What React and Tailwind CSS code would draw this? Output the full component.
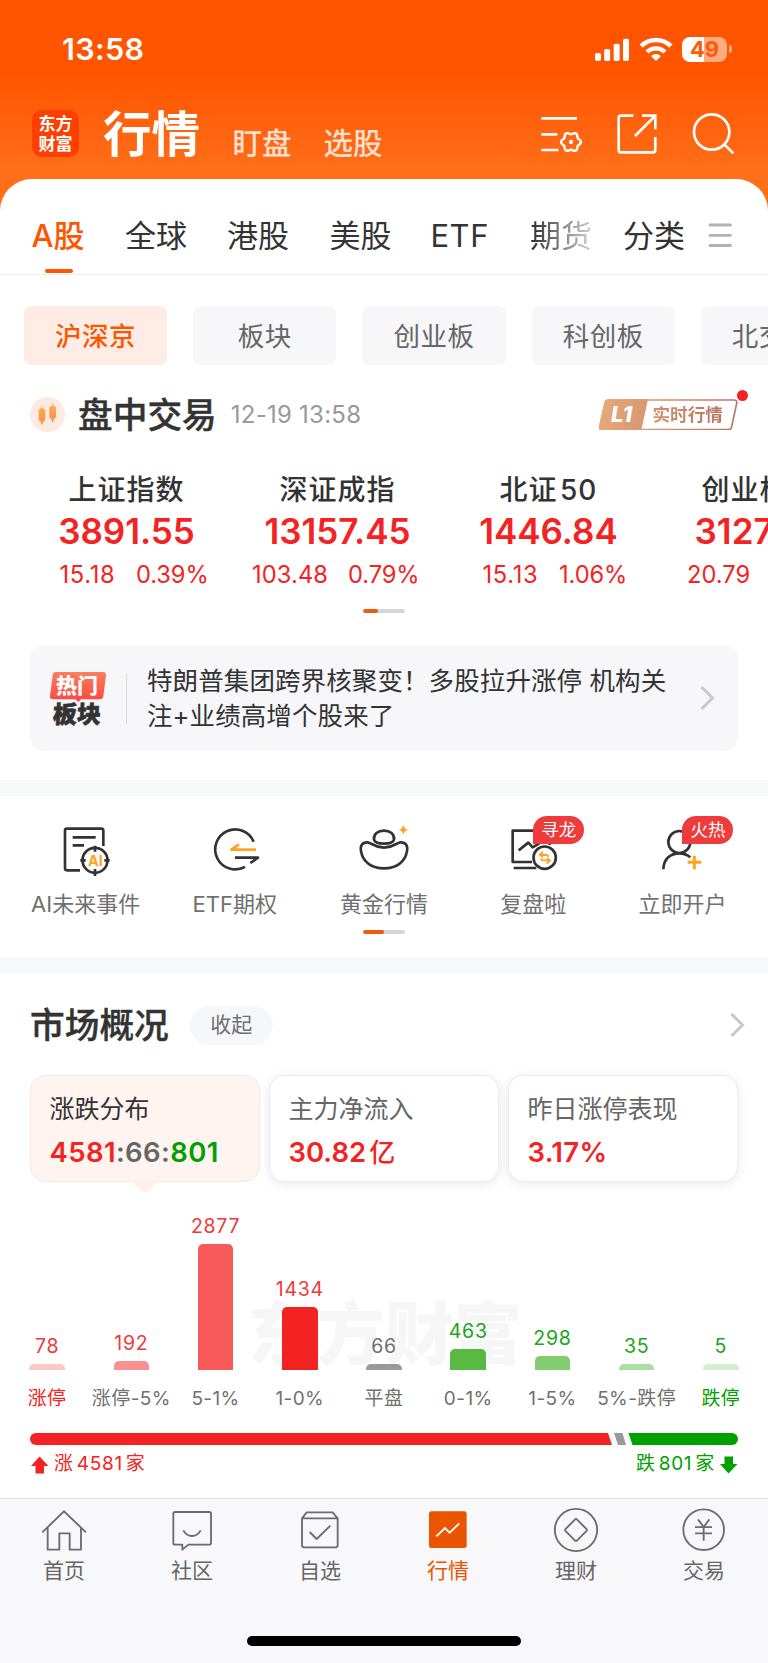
import React from "react";

const TABS = [
  { name: "全球", cls: "ml-[40.500px]" },
  { name: "港股", cls: "ml-[40px]" },
  { name: "美股", cls: "ml-[40.500px]" },
];

const CHIPS = ["沪深京", "板块", "创业板", "科创板", "北交所"];

const INDEXES = [
  { name: "上证指数", value: "3891.55", diff: "15.18", pct: "0.39%", pad: "pl-[38.500px]", gap: "w-[76.500px]", dt: "tracking-[0.700px]" },
  { name: "深证成指", value: "13157.45", diff: "103.48", pct: "0.79%", pad: "pl-[20px]", gap: "w-[96px]", dt: "tracking-[0.100px]" },
  { name: "北证 50", value: "1446.84", diff: "15.13", pct: "1.06%", pad: "pl-[39.500px]", gap: "w-[76.500px]", dt: "tracking-[0.700px]" },
  { name: "创业板指", value: "3127.95", diff: "20.79", pct: "0.67%", pad: "pl-[33px]", gap: "w-[80px]", dt: "tracking-[0px]" },
];

const BARS = [
  { v: "78", label: "涨停", h: 6.5, bar: "bg-[#fcc8c8]", text: "text-[#ee3a3a]", lab: "text-[#f42323]" },
  { v: "192", label: "涨停-5%", h: 9, bar: "bg-[#f99191]", text: "text-[#ee3a3a]", lab: "text-[#707070]" },
  { v: "2877", label: "5-1%", h: 126.5, bar: "bg-[#f85a5a]", text: "text-[#ee3a3a]", lab: "text-[#707070]" },
  { v: "1434", label: "1-0%", h: 63, bar: "bg-[#f42323]", text: "text-[#ee3a3a]", lab: "text-[#707070]" },
  { v: "66", label: "平盘", h: 6.5, bar: "bg-[#999999]", text: "text-[#707070]", lab: "text-[#707070]" },
  { v: "463", label: "0-1%", h: 21, bar: "bg-[#5ab943]", text: "text-[#1aa51a]", lab: "text-[#707070]" },
  { v: "298", label: "1-5%", h: 14, bar: "bg-[#83cc72]", text: "text-[#1aa51a]", lab: "text-[#707070]" },
  { v: "35", label: "5%-跌停", h: 6.5, bar: "bg-[#acdda1]", text: "text-[#1aa51a]", lab: "text-[#707070]" },
  { v: "5", label: "跌停", h: 6.5, bar: "bg-[#d5eed0]", text: "text-[#1aa51a]", lab: "text-[#00a000]" },
];

const gearPath = (cx, cy) => {
  const pts = [];
  for (let i = 0; i < 120; i++) {
    const a = (i / 120) * Math.PI * 2;
    const r = 26.5 + 3 * Math.cos(6 * a);
    pts.push(`${(cx + r * Math.cos(a)).toFixed(1)} ${(cy + r * Math.sin(a)).toFixed(1)}`);
  }
  return `M${pts.join("L")}Z`;
};

function StatusBar() {
  return (
    <div className="flex h-[98px] items-center justify-between pl-[62px] pr-[36px] text-white">
      <span className="text-[30.500px] font-semibold tracking-[0.300px]">13:58</span>
      <div className="flex items-center">
        <svg className="h-[25px] w-[36px]" viewBox="630 108 108 75" fill="#fff">
          <rect x="633" y="156" width="18" height="24" rx="5" />
          <rect x="660.5" y="144" width="18" height="36" rx="5" />
          <rect x="689" y="128" width="18" height="52" rx="5" />
          <rect x="717" y="113" width="18" height="67" rx="5" />
        </svg>
        <svg className="ml-[9px] h-[25px] w-[34px]" viewBox="764 108 102 75" fill="none" stroke="#fff">
          <path d="M770.5 135.5A63 63 0 0 1 859.5 135.5" strokeWidth="14" />
          <path d="M788 153A38.5 38.5 0 0 1 842 153" strokeWidth="13" />
          <path d="M815 180L800 165A21.500 21.500 0 0 1 830 165Z" fill="#fff" stroke="none" />
        </svg>
        <div className="ml-[9px] flex h-[25px] w-[45px] items-center justify-center rounded-[8px] bg-[linear-gradient(90deg,#fff_48.500%,#ffab80_48.500%)] text-[22px] font-bold leading-none text-[#ff5a05]">
          49
        </div>
        <div className="ml-[2px] h-[8px] w-[3px] rounded-r-[3px] bg-[#ffab80]" />
      </div>
    </div>
  );
}

function NavBar() {
  return (
    <div className="flex h-[81px] pl-[32px] pr-[33px] text-white">
      <div className="mt-[12px] flex h-[47px] w-[47px] flex-col items-center justify-center rounded-[10px] bg-[#ff3f00] text-[17px] font-bold leading-[20px]">
        <span>东方</span>
        <span>财富</span>
      </div>
      <span className="ml-[24px] text-[48.500px] font-bold leading-[73px]">行情</span>
      <span className="ml-[32.500px] text-[29.500px] font-medium leading-[91px] text-[#ffe0d0]">盯盘</span>
      <span className="ml-[32px] text-[29.500px] font-medium leading-[91px] text-[#ffe0d0]">选股</span>
      <div className="mt-[14px] ml-auto flex gap-[33px]">
        <svg className="h-[43px] w-[43px]" viewBox="0 0 129 129" fill="none" stroke="#fff" strokeWidth="8">
          <path d="M4 19H111M4 67H52M4 114H55" />
          <path d={gearPath(93, 90)} strokeWidth="7.5" strokeLinejoin="round" />
          <circle cx="93" cy="90" r="6.500" fill="#fff" stroke="none" />
        </svg>
        <svg className="h-[43px] w-[43px]" viewBox="0 0 129 129" fill="none" stroke="#fff" strokeWidth="8">
          <path d="M52 11H15Q8 11 8 18V114Q8 121 15 121H111Q118 121 118 114V75" />
          <path d="M57 72L117 12M78 11H118V52" />
        </svg>
        <svg className="h-[43px] w-[43px]" viewBox="0 0 129 129" fill="none" stroke="#fff" strokeWidth="8">
          <circle cx="59" cy="60" r="53" />
          <path d="M97 97L124 124" />
        </svg>
      </div>
    </div>
  );
}

function TopTabs() {
  return (
    <div className="flex h-[96px] border-b border-[#ececee] pl-[31.500px] text-[31px] leading-[113px] text-[#333]">
      <div className="relative font-medium text-[#ff5500]">
        A股
        <div className="absolute bottom-[1px] left-[13px] h-[4px] w-[28px] rounded-[2px] bg-[#ff5500]" />
      </div>
      {TABS.map((t) => (
        <span key={t.name} className={t.cls}>{t.name}</span>
      ))}
      <span className="ml-[39px] tracking-[0.500px]">ETF</span>
      <span className="ml-[41px] bg-[linear-gradient(90deg,#333_5%,#d5d5d5_100%)] bg-clip-text text-transparent">期货</span>
      <span className="ml-[31px]">分类</span>
      <svg className="ml-[23px] mt-[43px] h-[26px] w-[24px]" viewBox="0 0 24 26" stroke="#b2b2b2" strokeWidth="2.8" strokeLinecap="round">
        <path d="M2 3H22.500M2 13.300H22.500M2 23.500H22.500" />
      </svg>
    </div>
  );
}

function Pager({ wide }) {
  return (
    <div className="mx-auto h-[4px] w-[42.500px] shrink-0 overflow-hidden rounded-full bg-[#d3d6de]">
      <div className={`h-full rounded-full bg-[#f05a0c] ${wide ? "w-[21.500px]" : "w-[15.500px]"}`} />
    </div>
  );
}

function Chevron({ className }) {
  return (
    <svg className={`h-[24px] w-[15px] shrink-0 ${className}`} viewBox="0 0 15 24" fill="none" stroke="#c8c8c8" strokeWidth="3">
      <path d="M1.500 1L12.500 12L1.500 23" />
    </svg>
  );
}

function MarketHeader() {
  return (
    <div className="flex h-[64px] items-center pl-[30px]">
      <svg className="h-[35px] w-[35px]" viewBox="0 0 105 105">
        <defs>
          <linearGradient id="candle" x1="0" y1="0" x2="0" y2="1">
            <stop offset="0" stopColor="#ffac4d" />
            <stop offset="1" stopColor="#f98e4d" />
          </linearGradient>
        </defs>
        <circle cx="52.5" cy="52.5" r="52.5" fill="#ffeae1" />
        <g fill="url(#candle)">
          <path d="M36 28q2 0 2 6l6 3q2 1 2 4v25q0 4-3 6l-4 3q0 9-3 9t-3-9l-4-3q-3-2-3-6V41q0-3 2-4l6-3q0-6 2-6z" />
          <path d="M68 20q2 0 2 6l6 3q2 1 2 4v25q0 4-3 6l-4 3q0 9-3 9t-3-9l-4-3q-3-2-3-6V33q0-3 2-4l6-3q0-6 2-6z" />
        </g>
      </svg>
      <span className="ml-[13px] pt-[2px] text-[34.700px] font-medium text-[#333] [-webkit-text-stroke:0.400px_currentColor]">盘中交易</span>
      <span className="ml-[14px] pt-[2px] text-[24px] tracking-[0.250px] text-[#999]">12-19 13:58</span>
      <div className="relative ml-auto mr-[29px] h-[33px] w-[142px] -translate-y-[1px]">
        <svg className="h-[33px] w-[142px]" viewBox="0 0 426 99">
          <defs>
            <linearGradient id="gold" gradientUnits="userSpaceOnUse" x1="0" y1="0" x2="426" y2="60">
              <stop offset="0" stopColor="#e8ab7a" />
              <stop offset="1" stopColor="#b97462" />
            </linearGradient>
          </defs>
          <path d="M35 9H411Q421 9 419 19L404 89Q402 98 394 98H17Q6 98 8 89L24 18Q26 9 35 9Z" fill="none" stroke="url(#gold)" strokeWidth="5" />
          <path d="M33 7H153L133 99H16Q4 99 6 89L22 16Q25 7 33 7Z" fill="url(#gold)" />
        </svg>
        <span className="absolute left-[14px] top-[1px] text-[22px] font-extrabold italic leading-[32px] text-white">L1</span>
        <span className="absolute left-[55.500px] top-[2px] bg-[linear-gradient(90deg,#d0916d,#b97462)] bg-clip-text text-[17.600px] font-bold leading-[31px] text-transparent">实时行情</span>
        <div className="absolute -right-[9px] -top-[7px] h-[11px] w-[11px] rounded-full bg-[#f42323]" />
      </div>
    </div>
  );
}

function IndexStrip() {
  return (
    <div className="mt-[23px] flex w-full shrink-0 overflow-hidden pl-[21px]">
      {INDEXES.map((it) => (
        <div key={it.name} className="w-[211px] shrink-0">
          <div className="text-center text-[28px] font-medium leading-[42px] tracking-[1px] text-[#333] [word-spacing:-6px]">{it.name}</div>
          <div className="text-center text-[35px] font-semibold leading-[40px] text-[#f42323]">{it.value}</div>
          <div className={`mb-[2px] mt-[10px] flex whitespace-nowrap text-[23.700px] leading-[28px] text-[#f42323] ${it.pad}`}>
            <span className={`shrink-0 ${it.gap} ${it.dt}`}>{it.diff}</span>
            <span className="tracking-[-0.100px]">{it.pct}</span>
          </div>
        </div>
      ))}
    </div>
  );
}

function HotCard() {
  return (
    <div className="mx-[30px] mt-[32px] flex h-[106px] shrink-0 items-center rounded-[14px] bg-[#f7f7fa]">
      <div className="relative ml-[19px] h-[56px] w-[58px]">
        <svg className="h-[32px] w-[58px]" viewBox="147 122 174 96">
          <defs>
            <linearGradient id="hot" x1="0" y1="0" x2="0" y2="1">
              <stop offset="0" stopColor="#ff7d5e" />
              <stop offset="1" stopColor="#fb4640" />
            </linearGradient>
          </defs>
          <path d="M168 128H308Q319 128 318 138L310 200Q309 210 299 210H243L235 218L227 210H160Q149 210 150 200L158 138Q159 128 168 128Z" fill="url(#hot)" />
        </svg>
        <span className="absolute left-[7px] top-[3px] text-[21px] font-black leading-[26px] text-white">热门</span>
        <span className="absolute left-[4px] top-[31.500px] -skew-x-3 text-[24px] font-black leading-[26px] text-[#333] [-webkit-text-stroke:0.600px_currentColor]">板块</span>
      </div>
      <div className="ml-[19px] h-[51px] w-px bg-[#d9d9dc]" />
      <p className="ml-[20px] w-[535px] whitespace-nowrap text-[25.500px] leading-[35.500px] tracking-[0.100px] text-[#333]">
        特朗普集团跨界核聚变！多股拉升涨停 机构关
        <br />
        注+业绩高增个股来了
      </p>
      <Chevron className="ml-[18px]" />
    </div>
  );
}

function Feature({ label, badge, viewBox, children }) {
  return (
    <div className="relative flex flex-col items-center pt-[24px]">
      <svg className="h-[60px] w-[60px]" viewBox={viewBox} fill="none" stroke="#333" strokeWidth="8" strokeLinejoin="round">
        {children}
      </svg>
      {badge && (
        <div className="absolute left-1/2 top-[20px] flex h-[28px] w-[51px] items-center justify-center rounded-[14px] rounded-bl-none bg-[#ee3c3c] pt-[1px] text-[17.500px] text-white">
          {badge}
        </div>
      )}
      <span className="mt-[7.500px] text-[22px] leading-[32px] text-[#707070]">{label}</span>
    </div>
  );
}

function Features() {
  return (
    <div className="grid h-[134px] shrink-0 grid-cols-5 px-[11px]">
      <Feature label="AI未来事件" viewBox="168 570 180 180">
        <path d="M310 648V602Q310 596 304 596H201Q195 596 195 602V715Q195 721 201 721H240" />
        <path d="M218 622H287M218 646H252" />
        <circle cx="285" cy="691" r="37.500" />
        <path d="M285 647V665M285 717V738M241 691H257M313 691H329" />
        <text x="286" y="707" textAnchor="middle" fontSize="43" fontWeight="700" fill="#ffa31f" stroke="none">AI</text>
      </Feature>
      <Feature label="ETF期权" viewBox="615 570 180 180">
        <path d="M761 635A60 60 0 1 0 735 710.500" />
        <path d="M768 659H694L717 643" stroke="#ffa31f" />
        <path d="M705 683H774L751 699" />
      </Feature>
      <Feature label="黄金行情" viewBox="1062 570 180 180">
        <path d="M1103 637C1087 636 1080 646 1083 664C1089 698 1117 715 1152 715S1215 698 1221 664C1224 646 1217 636 1201 637C1188 639 1180 653 1152 653S1116 639 1103 637Z" />
        <path d="M1122 629C1120 612 1134 602 1152 602S1184 612 1182 629C1180 637 1168 641 1152 641S1124 637 1122 629Z" />
        <path d="M1210 584Q1212 597 1225 599Q1212 601 1210 615Q1208 601 1195 599Q1208 597 1210 584Z" fill="#ffa31f" stroke="none" />
      </Feature>
      <Feature label="复盘啦" badge="寻龙" viewBox="357 570 180 180">
        <path d="M497 645V602H386V696H444M389 714H457" />
        <path d="M404 661L433 638L446 652L466 640" />
        <circle cx="482" cy="683" r="33.500" />
        <path d="M467 675H488Q492 675 492 681M477 665L467 675L477 681" stroke="#ffa31f" strokeWidth="5.500" />
        <path d="M498 691H477Q472 691 472 685M488 701L498 691L488 685" stroke="#ffa31f" strokeWidth="5.500" />
      </Feature>
      <Feature label="立即开户" badge="火热" viewBox="804 570 180 180">
        <circle cx="886" cy="636" r="33" />
        <path d="M838 718C839 686 860 670 886 670C900 670 910 674 919 682" />
        <path d="M931 677V718M911 697H952" stroke="#ffa31f" strokeWidth="9" />
      </Feature>
    </div>
  );
}

function Overview() {
  return (
    <>
      <div className="flex h-[102px] shrink-0 items-center pl-[30px] pr-[23px]">
        <h2 className="pt-[1px] text-[34.700px] font-medium text-[#333] [-webkit-text-stroke:0.400px_currentColor]">市场概况</h2>
        <span className="ml-[21px] flex h-[39px] w-[83px] items-center justify-center rounded-full bg-[#f6f7fa] text-[21px] text-[#707070]">收起</span>
        <Chevron className="ml-auto" />
      </div>
      <div className="-mt-px flex shrink-0 gap-[9px] px-[30px] text-[27.500px] font-semibold leading-[36px]">
        <div className="relative h-[107px] w-[230px] rounded-[15px] border border-[#fee5da] bg-[#fff4f0] pl-[18.500px] pt-[15px]">
          <div className="text-[25px] font-normal text-[#333]">涨跌分布</div>
          <div className="mt-[7px] tracking-[0.400px] text-[#666]">
            <span className="text-[#f42323]">4581</span>:66:<span className="text-[#00a000]">801</span>
          </div>
          <svg className="absolute left-[100px] top-[104px] h-[14px] w-[28px]" viewBox="0 0 28 14">
            <path d="M0 0V1.500L11 11.500Q14 13.500 17 11.500L28 1.500V0Z" fill="#fff0ea" />
          </svg>
        </div>
        <div className="h-[107px] w-[230px] rounded-[15px] border border-[#ececec] bg-white pl-[18.500px] pt-[15px] shadow-[0_2px_12px_rgba(0,0,0,0.090)]">
          <div className="text-[25px] font-normal text-[#666]">主力净流入</div>
          <div className="mt-[7px] text-[#f42323]">30.82<span className="ml-[3px] text-[26px] font-medium">亿</span></div>
        </div>
        <div className="h-[107px] w-[230px] rounded-[15px] border border-[#ececec] bg-white pl-[18.500px] pt-[15px] shadow-[0_2px_12px_rgba(0,0,0,0.090)]">
          <div className="text-[25px] font-normal text-[#666]">昨日涨停表现</div>
          <div className="mt-[7px] tracking-[0.300px] text-[#f42323]">3.17%</div>
        </div>
      </div>
    </>
  );
}

function Distribution() {
  return (
    <div className="relative mt-[28px] shrink-0">
      <div className="absolute left-[248px] top-[81px] text-[68.500px] font-black leading-[88px] text-[#f6f6f7]">东方财富</div>
      <div className="relative grid h-[160px] grid-cols-9 px-[5px]">
        {BARS.map((b) => (
          <div key={b.label} className="flex flex-col items-center justify-end">
            <span className={`mb-[4px] text-[19.500px] leading-[28px] tracking-[0.700px] ${b.text}`}>{b.v}</span>
            <div className={`w-[35.500px] rounded-t-[5px] ${b.bar}`} style={{ height: b.h }} />
          </div>
        ))}
      </div>
      <div className="relative mt-[13px] grid grid-cols-9 px-[5px]">
        {BARS.map((b) => (
          <span key={b.label} className={`whitespace-nowrap text-center text-[19px] leading-[32px] tracking-[0.400px] ${b.lab}`}>{b.label}</span>
        ))}
      </div>
      <svg className="ml-[30px] mt-[18px] block h-[12px] w-[708px]" viewBox="0 0 708 12">
        <path d="M6 0H578L582 12H6A6 6 0 0 1 6 0Z" fill="#f42323" />
        <path d="M584 0H592.500L596 12H588Z" fill="#999" />
        <path d="M598.500 0H702A6 6 0 0 1 702 12H602.500Z" fill="#00a000" />
      </svg>
      <div className="flex h-[39px] items-center justify-between px-[30px] text-[19px] tracking-[0.700px]">
        <div className="flex items-center text-[#f42323]">
          <svg className="mr-[5px] h-[18px] w-[19px]" viewBox="0 0 19 18" fill="#f42323">
            <path d="M9.500 0.500L18.500 10H14V17.500H5.500V10H1Z" />
          </svg>
          涨<span className="mx-[3px]">4581</span>家
        </div>
        <div className="flex items-center text-[#00a000]">
          跌<span className="mx-[3px]">801</span>家
          <svg className="ml-[4px] h-[18px] w-[19px]" viewBox="0 0 19 18" fill="#00a000">
            <path d="M9.500 17.500L18.500 8H14V0.500H5.500V8H1Z" />
          </svg>
        </div>
      </div>
    </div>
  );
}

function Dock({ label, active, viewBox, children }) {
  return (
    <div className={`flex flex-col items-center pt-[7px] text-[21px] ${active ? "text-[#ea5504]" : "text-[#666]"}`}>
      <svg className="h-[48px] w-[48px]" viewBox={viewBox} fill="none" stroke={active ? "#fff" : "#6b6b6b"} strokeWidth="5.500" strokeLinejoin="round">
        {children}
      </svg>
      <span className="mt-[1px] leading-[32px]">{label}</span>
    </div>
  );
}

function BottomBar() {
  return (
    <div className="flex h-[165px] flex-col border-t border-[#dfdfe2] bg-[#f8f8fa]">
      <div className="grid grid-cols-6">
        <Dock label="首页" viewBox="120 78 144 144">
          <path d="M127 157L192 94L258 157" strokeLinejoin="miter" />
          <path d="M143 144V209H178V160H209V209H243V144" />
        </Dock>
        <Dock label="社区" viewBox="504 78 144 144">
          <path d="M525 96H628Q633 96 633 101V189Q633 194 628 194H565L547 209V194H525Q520 194 520 189V101Q520 96 525 96Z" />
          <path d="M550 151Q559 168 576 168T602 151" />
        </Dock>
        <Dock label="自选" viewBox="888 78 144 144">
          <path d="M906 115L920 97H998L1013 115V196Q1013 202 1007 202H912Q906 202 906 196ZM906 115H1013" />
          <path d="M929 156L950 177L991 137" />
        </Dock>
        <Dock label="行情" active viewBox="120 78 144 144">
          <rect x="135" y="94" width="113" height="110" rx="7" fill="#ea5504" stroke="none" />
          <path d="M157 169L183 144L197 158L226 130" strokeLinejoin="miter" />
        </Dock>
        <Dock label="理财" viewBox="504 78 144 144">
          <circle cx="576" cy="150" r="63.500" />
          <path d="M572.500 119Q576 115 579.500 119L607 146.500Q611 150 607 153.500L579.500 181Q576 185 572.500 181L545 153.500Q541 150 545 146.500Z" />
        </Dock>
        <Dock label="交易" viewBox="888 78 144 144">
          <circle cx="959" cy="149" r="61" />
          <path d="M942 118L959 141L976 118M959 141V182M933 141.500H984M933 160H984" />
        </Dock>
      </div>
      <div className="mx-auto mb-[17px] mt-auto h-[10px] w-[274px] rounded-full bg-black" />
    </div>
  );
}

export default function App() {
  return (
    <div className="h-[1663px] w-[768px] overflow-hidden bg-[linear-gradient(180deg,#ff5500_0px,#ff5500_75px,#ff6e19_170px,#ff6e19_230px)] font-['Inter','Noto_Sans_CJK_SC',sans-serif]">
      <StatusBar />
      <NavBar />
      <div className="flex h-[1484px] flex-col rounded-t-[32px] bg-white">
        <TopTabs />
        <div className="mt-[31px] flex h-[59px] shrink-0 gap-[26px] overflow-hidden pl-[24px] text-[26.500px] leading-[61px]">
          {CHIPS.map((c, i) => (
            <div
              key={c}
              className={`w-[143.200px] shrink-0 rounded-[7px] text-center tracking-[0.500px] ${i === 0 ? "bg-[#ffede5] font-medium text-[#ff5500]" : "bg-[#f7f7fa] text-[#666]"}`}
            >
              {c}
            </div>
          ))}
        </div>
        <div className="mt-[17px]">
          <MarketHeader />
        </div>
        <IndexStrip />
        <div className="mt-[18px]">
          <Pager />
        </div>
        <HotCard />
        <div className="mt-[29px] h-[16px] shrink-0 bg-[#f7f8fa]" />
        <Features />
        <Pager wide />
        <div className="mt-[23px] h-[17px] shrink-0 bg-[#f7f8fa]" />
        <Overview />
        <Distribution />
        <div className="mt-auto">
          <BottomBar />
        </div>
      </div>
    </div>
  );
}
